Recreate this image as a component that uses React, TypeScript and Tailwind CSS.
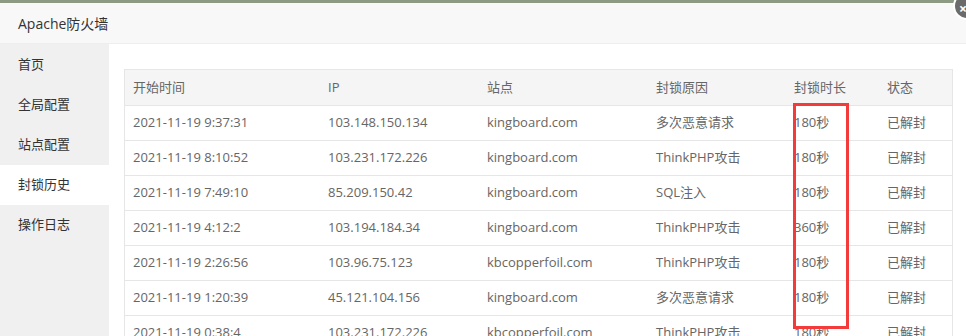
const menu = ['首页', '全局配置', '站点配置', '封锁历史', '操作日志'];

const rows = [
  ['2021-11-19 9:37:31', '103.148.150.134', 'kingboard.com', '多次恶意请求', '180秒', '已解封'],
  ['2021-11-19 8:10:52', '103.231.172.226', 'kingboard.com', 'ThinkPHP攻击', '180秒', '已解封'],
  ['2021-11-19 7:49:10', '85.209.150.42', 'kingboard.com', 'SQL注入', '180秒', '已解封'],
  ['2021-11-19 4:12:2', '103.194.184.34', 'kingboard.com', 'ThinkPHP攻击', '360秒', '已解封'],
  ['2021-11-19 2:26:56', '103.96.75.123', 'kbcopperfoil.com', 'ThinkPHP攻击', '180秒', '已解封'],
  ['2021-11-19 1:20:39', '45.121.104.156', 'kingboard.com', '多次恶意请求', '180秒', '已解封'],
  ['2021-11-19 0:38:4', '103.231.172.226', 'kbcopperfoil.com', 'ThinkPHP攻击', '180秒', '已解封'],
];

const cols = ['w-[195px]', 'w-[159px]', 'w-[169px]', 'w-[138px]', 'w-[93px]', 'w-[75px]'];
const heads = ['开始时间', 'IP', '站点', '封锁原因', '封锁时长', '状态'];

export default function App() {
  return (
    <div className="relative w-[966px] h-[336px] overflow-hidden bg-white text-[13px] font-['Open_Sans','Noto_Sans_CJK_SC',sans-serif]">
      <div className="h-[3px] bg-[#8c9a83]" />
      <div className="h-[41px] bg-[#f8f8f8] border-b border-[#eeeeee] flex items-center pl-[18px] text-[14px] text-[#333]">
        Apache防火墙
      </div>
      <div className="flex h-[292px]">
        <aside className="w-[109px] shrink-0 bg-[#f0f0f0] pt-px">
          {menu.map((m) => (
            <div
              key={m}
              className={`h-10 flex items-center pl-[18px] text-[#333] ${m === '封锁历史' ? 'bg-white' : ''}`}
            >
              {m}
            </div>
          ))}
        </aside>
        <main className="flex-1 pl-[15px] pt-[25px]">
          <div className="w-[829px] border border-[#e6e6e6] border-b-0 text-[#666]">
            <div className="flex h-[35px] items-center bg-[#f5f5f5]">
              {heads.map((h, i) => (
                <div key={h} className={`${cols[i]} pl-2 shrink-0`}>{h}</div>
              ))}
            </div>
            {rows.map((r, ri) => (
              <div key={ri} className="flex h-[35px] items-center border-t border-[#e6e6e6]">
                {r.map((c, i) => (
                  <div key={i} className={`${cols[i]} pl-2 shrink-0 whitespace-nowrap`}>{c}</div>
                ))}
              </div>
            ))}
          </div>
        </main>
      </div>
      <div className="absolute left-[793px] top-[103px] w-[56px] h-[226px] border-[3px] border-[#f33b3b]" />
      <div className="absolute left-[953px] top-[-8px] w-[28px] h-[28px] rounded-full bg-[#6b6b6b] border-2 border-white flex items-center justify-center text-white text-[14px] font-bold">
        <span className="-ml-2 mt-1">×</span>
      </div>
    </div>
  );
}
